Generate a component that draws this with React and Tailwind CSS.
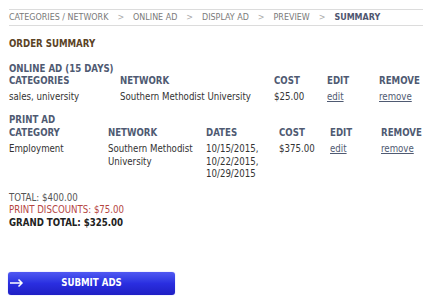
export default function App() {
  const font = { fontFamily: '"DejaVu Sans Condensed", "DejaVu Sans", Tahoma, sans-serif' };
  const head = "font-bold text-[#4f5a72]";
  return (
    <div className="w-[423px] h-[300px] bg-white text-[9.6px] leading-[12.5px] text-[#333]" style={font}>
      <div className="pt-[9px] pl-[9px]">
        <div className="border-t border-b border-[#dcdcdc] h-[17px] flex items-center text-[#7a7a7a] text-[8.9px] gap-[9px] whitespace-nowrap">
          <span>CATEGORIES / NETWORK</span>
          <span className="text-[#aaa]">&gt;</span>
          <span>ONLINE AD</span>
          <span className="text-[#aaa]">&gt;</span>
          <span>DISPLAY AD</span>
          <span className="text-[#aaa]">&gt;</span>
          <span>PREVIEW</span>
          <span className="text-[#aaa]">&gt;</span>
          <span className="font-bold text-[#4f5670]">SUMMARY</span>
        </div>
        <div className="mt-[12px] font-bold text-[#5b4326]">ORDER SUMMARY</div>

        <div className={`mt-[12px] ${head}`}>ONLINE AD (15 DAYS)</div>
        <div className="grid grid-cols-[111px_154px_53px_52px_1fr]">
          <div className={head}>CATEGORIES</div>
          <div className={head}>NETWORK</div>
          <div className={head}>COST</div>
          <div className={head}>EDIT</div>
          <div className={head}>REMOVE</div>
          <div className="mt-[3px]">sales, university</div>
          <div className="mt-[3px]">Southern Methodist University</div>
          <div className="mt-[3px]">$25.00</div>
          <div className="mt-[3px]"><a className="underline text-[#4f5a72]" href="#">edit</a></div>
          <div className="mt-[3px]"><a className="underline text-[#4f5a72]" href="#">remove</a></div>
        </div>

        <div className={`mt-[11px] ${head}`}>PRINT AD</div>
        <div className="grid grid-cols-[99px_98px_73px_51px_51px_1fr]">
          <div className={head}>CATEGORY</div>
          <div className={head}>NETWORK</div>
          <div className={head}>DATES</div>
          <div className={head}>COST</div>
          <div className={head}>EDIT</div>
          <div className={head}>REMOVE</div>
          <div className="mt-[4px]">Employment</div>
          <div className="mt-[4px]">Southern Methodist<br />University</div>
          <div className="mt-[4px]">10/15/2015,<br />10/22/2015,<br />10/29/2015</div>
          <div className="mt-[4px]">$375.00</div>
          <div className="mt-[4px]"><a className="underline text-[#4f5a72]" href="#">edit</a></div>
          <div className="mt-[4px]"><a className="underline text-[#4f5a72]" href="#">remove</a></div>
        </div>

        <div className="mt-[11px] text-[#555]">TOTAL: $400.00</div>
        <div className="text-[#b5453f]">PRINT DISCOUNTS: $75.00</div>
        <div className="font-bold text-[#222]">GRAND TOTAL: $325.00</div>
      </div>

      <div className="pl-[8px] mt-[43px]">
        <button className="relative w-[167px] h-[23px] rounded-[3px] bg-gradient-to-b from-[#5058f2] via-[#2a2ee0] to-[#1f1fc4] text-white font-bold text-[9.6px] flex items-center justify-center shadow-[0_0_1px_#8890ff]">
          <svg className="absolute left-[2px] top-[6px]" width="14" height="10" viewBox="0 0 14 10" fill="none" stroke="white" strokeWidth="1.5">
            <path d="M0 5h12M8.5 1.5L12 5l-3.5 3.5" />
          </svg>
          SUBMIT ADS
        </button>
      </div>
    </div>
  );
}
